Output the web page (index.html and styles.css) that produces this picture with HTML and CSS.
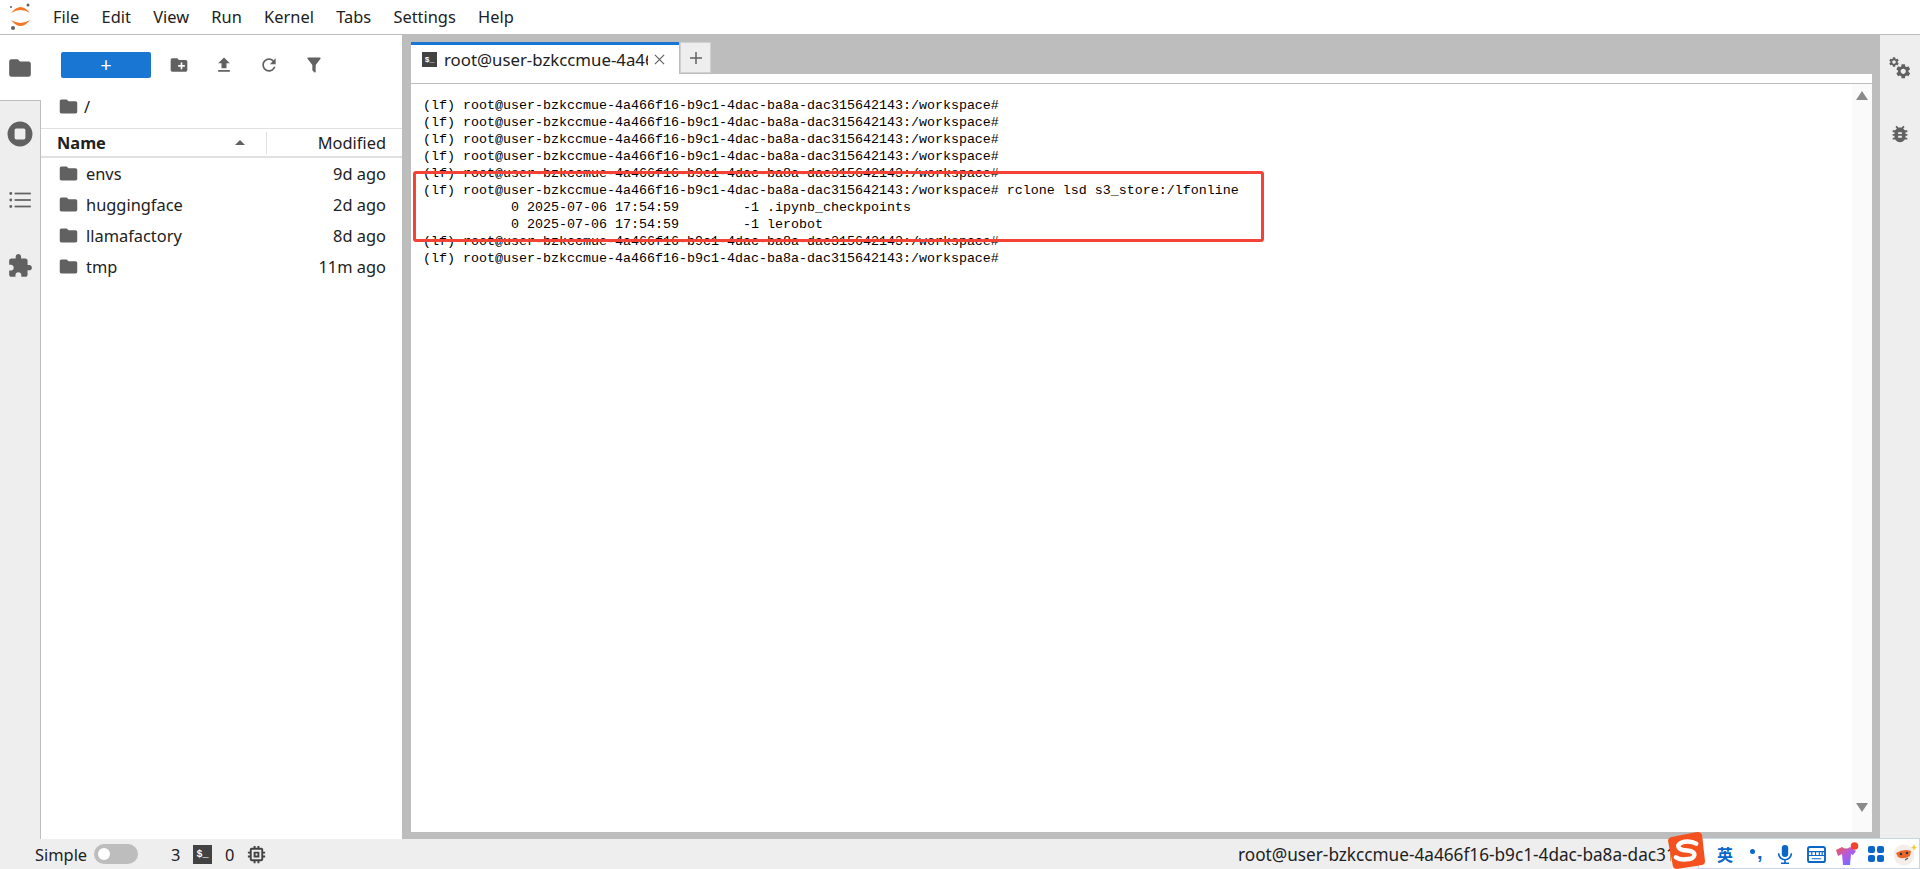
FILE: index.html
```html
<!DOCTYPE html>
<html lang="en">
<head>
<meta charset="utf-8">
<title>JupyterLab</title>
<link rel="stylesheet" href="styles.css">
</head>
<body>
<svg class="defs" aria-hidden="true">
  <symbol id="i-folder" viewBox="0 0 24 24"><path d="M10 4H4c-1.1 0-1.99.9-1.99 2L2 18c0 1.1.9 2 2 2h16c1.1 0 2-.9 2-2V8c0-1.1-.9-2-2-2h-8l-2-2z"/></symbol>
  <symbol id="i-gear" viewBox="0 0 24 24"><path d="M19.14 12.94c.04-.3.06-.61.06-.94 0-.32-.02-.64-.07-.94l2.03-1.58c.18-.14.23-.41.12-.61l-1.92-3.32c-.12-.22-.37-.29-.59-.22l-2.39.96c-.5-.38-1.03-.7-1.62-.94l-.36-2.54c-.04-.24-.24-.41-.48-.41h-3.84c-.24 0-.43.17-.47.41l-.36 2.54c-.59.24-1.13.57-1.62.94l-2.39-.96c-.22-.08-.47 0-.59.22L2.74 8.87c-.12.21-.08.47.12.61l2.03 1.58c-.05.3-.09.63-.09.94s.02.64.07.94l-2.03 1.58c-.18.14-.23.41-.12.61l1.92 3.32c.12.22.37.29.59.22l2.39-.96c.5.38 1.03.7 1.62.94l.36 2.54c.05.24.24.41.48.41h3.84c.24 0 .44-.17.47-.41l.36-2.54c.59-.24 1.13-.56 1.62-.94l2.39.96c.22.08.47 0 .59-.22l1.92-3.32c.12-.22.07-.47-.12-.61l-2.01-1.58zM12 15.6c-1.98 0-3.6-1.62-3.6-3.6s1.62-3.6 3.6-3.6 3.6 1.62 3.6 3.6-1.62 3.6-3.6 3.6z"/></symbol>
</svg>

<header class="menubar">
  <svg class="logo" viewBox="0 0 40 34">
    <path class="logo-arc" d="M11 13Q20.500 1 30 13Q20.500 7 11 13Z"/>
    <path class="logo-arc" d="M11 20Q20.500 32 30 20Q20.500 26 11 20Z"/>
    <circle class="logo-dot" cx="11" cy="7" r="1"/>
    <circle class="logo-dot" cx="28" cy="5" r="1.500"/>
    <circle class="logo-dot" cx="13" cy="28" r="2"/>
  </svg>
  <nav class="menu">
    <span class="menu-item">File</span>
    <span class="menu-item">Edit</span>
    <span class="menu-item">View</span>
    <span class="menu-item">Run</span>
    <span class="menu-item">Kernel</span>
    <span class="menu-item">Tabs</span>
    <span class="menu-item">Settings</span>
    <span class="menu-item">Help</span>
  </nav>
</header>

<div class="workspace">
  <aside class="side side-left">
    <div class="side-tab side-tab-active">
      <svg class="side-icon" viewBox="0 0 24 24"><use href="#i-folder"/></svg>
    </div>
    <div class="side-tab">
      <svg class="side-icon side-icon-stop" viewBox="0 0 24 24"><path d="M12 .5a11.500 11.500 0 1 0 0 23 11.500 11.500 0 0 0 0-23zM17 15.500c0 .8-.7 1.500-1.500 1.500h-7c-.8 0-1.500-.7-1.500-1.500v-7C7 7.700 7.700 7 8.500 7h7c.8 0 1.500.7 1.500 1.500z"/></svg>
    </div>
    <div class="side-tab">
      <svg class="side-icon" viewBox="0 0 24 24"><circle cx="3.500" cy="6" r="1.300"/><circle cx="3.500" cy="12" r="1.300"/><circle cx="3.500" cy="18" r="1.300"/><rect x="7" y="5.200" width="15" height="1.600"/><rect x="7" y="11.200" width="15" height="1.600"/><rect x="7" y="17.200" width="15" height="1.600"/></svg>
    </div>
    <div class="side-tab">
      <svg class="side-icon" viewBox="0 0 24 24"><path d="M20.500 11H19V7c0-1.100-.9-2-2-2h-4V3.500C13 2.120 11.880 1 10.500 1S8 2.120 8 3.500V5H4c-1.100 0-1.990.9-1.990 2v3.800H3.500c1.490 0 2.700 1.210 2.700 2.700s-1.210 2.700-2.700 2.700H2V20c0 1.100.9 2 2 2h3.800v-1.500c0-1.490 1.210-2.700 2.700-2.700 1.490 0 2.700 1.210 2.700 2.700V22H17c1.100 0 2-.9 2-2v-4h1.500c1.380 0 2.500-1.120 2.500-2.500S21.880 11 20.500 11z"/></svg>
    </div>
    <div class="side-fill"></div>
  </aside>

  <section class="files">
    <div class="toolbar">
      <button class="new-btn">+</button>
      <div class="tool"><svg class="tool-icon" viewBox="0 0 24 24"><path d="M20 6h-8l-2-2H4c-1.110 0-1.990.89-1.990 2L2 18c0 1.110.89 2 2 2h16c1.110 0 2-.89 2-2V8c0-1.110-.89-2-2-2zm-1 8h-3v3h-2v-3h-3v-2h3V9h2v3h3v2z"/></svg></div>
      <div class="tool"><svg class="tool-icon" viewBox="0 0 24 24"><path d="M9 16h6v-6h4l-7-7-7 7h4v6zm-4 2h14v2H5z"/></svg></div>
      <div class="tool"><svg class="tool-icon" viewBox="0 0 24 24"><path d="M17.650 6.350C16.200 4.900 14.210 4 12 4c-4.420 0-7.990 3.580-7.990 8s3.570 8 7.990 8c3.730 0 6.840-2.550 7.730-6h-2.080c-.82 2.330-3.040 4-5.650 4-3.310 0-6-2.690-6-6s2.690-6 6-6c1.660 0 3.140.69 4.220 1.780L13 11h7V4l-2.350 2.350z"/></svg></div>
      <div class="tool"><svg class="tool-icon" viewBox="0 0 24 24"><path d="M14 12v7.880c.04.3-.06.62-.29.83-.39.39-1.020.39-1.410 0l-2.010-2.010c-.23-.23-.33-.54-.29-.83V12h-.03L4.210 4.620c-.34-.43-.26-1.060.17-1.400.19-.14.4-.22.62-.22h14c.22 0 .43.08.62.22.43.34.51.97.17 1.400L14.030 12H14z"/></svg></div>
    </div>
    <div class="crumbs">
      <svg class="crumb-icon" viewBox="0 0 24 24"><use href="#i-folder"/></svg>
      <span class="crumb-text">/</span>
    </div>
    <div class="list-head">
      <div class="head-name"><span>Name</span><i class="caret-up"></i></div>
      <div class="head-mod">Modified</div>
    </div>
    <ul class="list">
      <li class="row"><svg class="row-icon" viewBox="0 0 24 24"><use href="#i-folder"/></svg><span class="row-name">envs</span><span class="row-date">9d ago</span></li>
      <li class="row"><svg class="row-icon" viewBox="0 0 24 24"><use href="#i-folder"/></svg><span class="row-name">huggingface</span><span class="row-date">2d ago</span></li>
      <li class="row"><svg class="row-icon" viewBox="0 0 24 24"><use href="#i-folder"/></svg><span class="row-name">llamafactory</span><span class="row-date">8d ago</span></li>
      <li class="row"><svg class="row-icon" viewBox="0 0 24 24"><use href="#i-folder"/></svg><span class="row-name">tmp</span><span class="row-date">11m ago</span></li>
    </ul>
  </section>

  <main class="dock">
    <div class="tabbar">
      <div class="tab">
        <span class="term-icon term-icon-tab">$_</span>
        <span class="tab-title">root@user-bzkccmue-4a466f16-b9c1-4dac-ba8a-dac315642143</span>
        <svg class="tab-close" viewBox="0 0 12 12"><path d="M1 1l10 10M11 1L1 11"/></svg>
      </div>
      <div class="tab-add"><svg class="tab-plus" viewBox="0 0 12 12"><path d="M6 0v12M0 6h12"/></svg></div>
    </div>
    <div class="tab-strip"></div>
    <div class="terminal">
      <pre class="term-text">(lf) root@user-bzkccmue-4a466f16-b9c1-4dac-ba8a-dac315642143:/workspace#
(lf) root@user-bzkccmue-4a466f16-b9c1-4dac-ba8a-dac315642143:/workspace#
(lf) root@user-bzkccmue-4a466f16-b9c1-4dac-ba8a-dac315642143:/workspace#
(lf) root@user-bzkccmue-4a466f16-b9c1-4dac-ba8a-dac315642143:/workspace#
(lf) root@user-bzkccmue-4a466f16-b9c1-4dac-ba8a-dac315642143:/workspace#
(lf) root@user-bzkccmue-4a466f16-b9c1-4dac-ba8a-dac315642143:/workspace# rclone lsd s3_store:/lfonline
           0 2025-07-06 17:54:59        -1 .ipynb_checkpoints
           0 2025-07-06 17:54:59        -1 lerobot
(lf) root@user-bzkccmue-4a466f16-b9c1-4dac-ba8a-dac315642143:/workspace#
(lf) root@user-bzkccmue-4a466f16-b9c1-4dac-ba8a-dac315642143:/workspace#</pre>
      <div class="scrollbar"><i class="sb-up"></i><i class="sb-down"></i></div>
    </div>
  </main>

  <aside class="side side-right">
    <div class="right-tab">
      <svg class="gears" viewBox="0 0 24 24"><use href="#i-gear" x="0" y="0" width="12" height="12"/><use href="#i-gear" x="6.500" y="6.500" width="17.500" height="17.500"/></svg>
    </div>
    <div class="right-tab">
      <svg class="bug" viewBox="0 0 24 24"><path d="M20 8h-2.810c-.45-.78-1.070-1.450-1.820-1.960L17 4.410 15.590 3l-2.170 2.170C12.960 5.060 12.490 5 12 5c-.49 0-.96.06-1.410.17L8.410 3 7 4.410l1.620 1.630C7.880 6.550 7.260 7.220 6.810 8H4v2h2.090c-.05.33-.09.66-.09 1v1H4v2h2v1c0 .34.04.67.09 1H4v2h2.810c1.040 1.790 2.970 3 5.190 3s4.150-1.210 5.190-3H20v-2h-2.090c.05-.33.09-.66.09-1v-1h2v-2h-2v-1c0-.34-.04-.67-.09-1H20V8zm-6 8h-4v-2h4v2zm0-4h-4v-2h4v2z"/></svg>
    </div>
  </aside>
</div>

<footer class="status">
  <div class="status-left">
    <span class="st-simple">Simple</span>
    <span class="toggle"><i class="knob"></i></span>
    <span class="st-num">3</span>
    <span class="term-icon term-icon-status">$_</span>
    <span class="st-num st-zero">0</span>
    <svg class="chip" viewBox="0 0 24 24"><path d="M15 9H9v6h6V9zm-2 4h-2v-2h2v2zm8-2V9h-2V7c0-1.100-.9-2-2-2h-2V3h-2v2h-2V3H9v2H7c-1.100 0-2 .9-2 2v2H3v2h2v2H3v2h2v2c0 1.100.9 2 2 2h2v2h2v-2h2v2h2v-2h2c1.100 0 2-.9 2-2v-2h2v-2h-2v-2h2zm-4 6H7V7h10v10z"/></svg>
  </div>
  <div class="status-right">root@user-bzkccmue-4a466f16-b9c1-4dac-ba8a-dac315642143</div>
</footer>

<div class="annotation"></div>

<div class="ime">
  <svg class="ime-logo" viewBox="0 0 38 38">
    <path class="ime-logo-bg" d="M5 5L30 0Q34 0 35 3L38 30Q38 33 35 34L9 38Q6 38 5 35L0 9Q0 6 5 5Z"/>
    <path class="ime-logo-s" d="M29 12Q24 9 17 10Q9 12 11 16Q13 19 20 19Q28 20 27 24Q26 28 18 28Q12 29 8 26"/>
  </svg>
  <span class="ime-text">英</span>
  <span class="ime-punct"><i class="ime-dot"></i><span class="ime-comma">,</span></span>
  <svg class="ime-mic" viewBox="0 0 20 24"><rect x="6" y="0" width="8" height="15" rx="4"/><path class="ime-line" d="M2 10.500a8 8 0 0 0 16 0M10 18.500V23M5 23h10"/></svg>
  <svg class="ime-kbd" viewBox="0 0 20 18"><rect class="ime-line" x="1" y="1" width="18" height="16" rx="2"/><path class="ime-line ime-thin" d="M1 6h18M1 10h18M5 6v4M9 6v4M13 6v4M16 6v4M5 13.500h10"/></svg>
  <svg class="ime-shirt" viewBox="0 0 24 24">
    <defs><linearGradient id="shirt" x1="0" y1="0" x2="1" y2="1"><stop offset="0" stop-color="#f0574a"/><stop offset=".5" stop-color="#b05ce8"/><stop offset="1" stop-color="#4a7bff"/></linearGradient></defs>
    <path fill="url(#shirt)" d="M1 8L7 5Q11 8 15 5L21 9L18 13L16 12L15 23H8L7 12L3 14Z"/>
    <circle cx="19.500" cy="4" r="3.800" fill="#f0442f"/>
  </svg>
  <svg class="ime-grid" viewBox="0 0 16 16"><rect x="0" y="0" width="7" height="7" rx="2"/><rect x="9" y="0" width="7" height="7" rx="2"/><rect x="0" y="9" width="7" height="7" rx="2"/><rect x="9" y="9" width="7" height="7" rx="2"/></svg>
  <svg class="ime-mascot" viewBox="0 0 24 24">
    <circle cx="11" cy="13" r="10.500" fill="#f4eeea"/>
    <path d="M3 11Q11 6 18 9L17 14Q10 18 5 15Z" fill="#e8672a"/>
    <circle cx="8" cy="12" r="1.200" fill="#333"/><circle cx="14" cy="11" r="1.200" fill="#333"/>
    <path d="M12 18l3-2" stroke="#555" stroke-width="1.200"/>
    <path d="M21 2l1 2.500 2 1-2 1-1 2.500-1-2.500-2-1 2-1z" fill="#f5c944"/>
  </svg>
</div>
</body>
</html>
```

FILE: styles.css
```css
* { box-sizing: border-box; }
html, body { margin: 0; height: 100%; }
body {
  display: flex;
  flex-direction: column;
  height: 869px;
  overflow: hidden;
  position: relative;
  font-family: "Noto Sans", "Open Sans", sans-serif;
  font-size: 16.400px;
  color: #212121;
  background: #fff;
}
.defs { width: 0; height: 0; position: absolute; }

/* menu */
.menubar {
  display: flex;
  align-items: center;
  height: 35px;
  flex: none;
  border-bottom: 1px solid #bdbdbd;
}
.logo { width: 40px; height: 34px; flex: none; }
.logo-arc { fill: #f37726; }
.logo-dot { fill: #616161; }
.menu { display: flex; padding-left: 13px; }
.menu-item { margin-right: 22.300px; font-size: 16.400px; line-height: 20px; }

/* layout */
.workspace { flex: 1; display: flex; min-height: 0; }
.side { width: 41px; flex: none; background: #eee; display: flex; flex-direction: column; }
.side-left { background: transparent; }
.side-tab {
  height: 66px;
  flex: none;
  display: flex;
  align-items: center;
  justify-content: center;
  padding-right: 1px;
  background: #eee;
  border-right: 1px solid #bdbdbd;
}
.side-tab-active { background: #fff; border-right: 0; border-bottom: 1px solid #bdbdbd; }
.side-fill { flex: 1; background: #eee; border-right: 1px solid #bdbdbd; }
.side-icon { width: 26px; height: 26px; fill: #616161; }
.side-icon-stop { width: 26px; height: 26px; }

/* file browser */
.files { width: 361px; flex: none; display: flex; flex-direction: column; background: #fff; }
.toolbar { display: flex; align-items: center; height: 60px; padding: 0 0 0 20px; }
.new-btn {
  width: 90px;
  height: 26px;
  border: 0;
  border-radius: 2px;
  background: #1976d2;
  color: #fff;
  font-family: inherit;
  font-size: 20px;
  line-height: 26px;
  padding: 0;
  margin-right: 5px;
}
.tool { width: 45px; display: flex; justify-content: center; }
.tool-icon { width: 20px; height: 20px; fill: #616161; }
.crumbs { display: flex; align-items: center; height: 22px; margin-bottom: 11px; padding-left: 17px; }
.crumb-icon { width: 21px; height: 21px; fill: #616161; }
.crumb-text { margin-left: 5px; }
.list-head {
  display: flex;
  height: 30px;
  border-top: 1px solid #e0e0e0;
  border-bottom: 2px solid #e0e0e0;
  align-items: center;
}
.head-name {
  width: 226px;
  padding: 0 17px 0 16px;
  display: flex;
  align-items: center;
  justify-content: space-between;
  font-weight: 700;
  border-right: 1px solid #e0e0e0;
  height: 22px;
}
.caret-up {
  width: 0; height: 0;
  border-left: 5.500px solid transparent;
  border-right: 5.500px solid transparent;
  border-bottom: 5.500px solid #616161;
  margin-right: 4px;
}
.head-mod { flex: 1; text-align: right; padding-right: 16px; }
.list { list-style: none; margin: 0; padding: 0; }
.row { display: flex; align-items: center; height: 31px; padding: 0 16px 0 17px; }
.row-icon { width: 21px; height: 21px; fill: #616161; flex: none; }
.row-name { flex: 1; margin-left: 7px; }
.row-date { color: #212121; }

/* dock */
.dock {
  flex: 1;
  min-width: 0;
  display: flex;
  flex-direction: column;
  background: #bdbdbd;
  padding: 7px 8px 7px 9px;
}
.tabbar { display: flex; height: 32px; flex: none; }
.tab {
  width: 268px;
  display: flex;
  align-items: center;
  background: #fff;
  border-top: 3px solid #1976d2;
  padding: 0 11px;
  position: relative;
}
.tab-title {
  width: 204px;
  margin-left: 7px;
  overflow: hidden;
  white-space: nowrap;
  font-size: 16.800px;
  flex: none;
}
.tab-close { width: 11px; height: 11px; margin-left: 6px; stroke: #616161; stroke-width: 1.300; flex: none; }
.tab-add {
  width: 31px;
  height: 31px;
  margin-left: 1px;
  background: #eee;
  border: 1px solid #d0d0d0;
  display: flex;
  align-items: center;
  justify-content: center;
}
.tab-plus { width: 12px; height: 12px; stroke: #616161; stroke-width: 1.500; }
.tab-strip { height: 10px; flex: none; background: #fff; border-bottom: 1px solid #bdbdbd; }
.terminal { flex: 1; min-height: 0; position: relative; display: flex; background: #fff; }
.term-text {
  flex: 1;
  margin: 0;
  padding: 13px 0 0 12px;
  font-family: "Liberation Mono", "DejaVu Sans Mono", monospace;
  font-size: 13.330px;
  line-height: 17px;
  color: #000;
}
.scrollbar {
  width: 20px;
  flex: none;
  background: #fafafa;
  display: flex;
  flex-direction: column;
  justify-content: space-between;
  align-items: center;
  padding: 7px 0 20px;
}
.sb-up, .sb-down {
  width: 0; height: 0;
  border-left: 6px solid transparent;
  border-right: 6px solid transparent;
}
.sb-up { border-bottom: 9px solid #8a8a8a; }
.sb-down { border-top: 9px solid #8a8a8a; }

.side-right { width: 40px; }
.right-tab { height: 66px; display: flex; align-items: center; justify-content: center; }
.gears { width: 24px; height: 24px; fill: #616161; }
.bug { width: 22px; height: 22px; fill: #616161; }

/* status bar */
.status { height: 30px; flex: none; display: flex; align-items: center; background: #eee; }
.status-left { display: flex; align-items: center; flex: 1; padding-left: 35px; }
.st-simple { width: 59px; }
.toggle { width: 44px; height: 20px; border-radius: 10px; background: #bdbdbd; display: flex; align-items: center; padding-left: 4px; }
.knob { width: 12px; height: 12px; border-radius: 50%; background: #fff; }
.st-num { margin-left: 33px; width: 22px; }
.st-zero { margin-left: 13px; width: 20px; }
.term-icon {
  display: inline-block;
  flex: none;
  background: #424242;
  color: #fff;
  font-family: "Liberation Mono", monospace;
  font-weight: 700;
  text-align: center;
}
.term-icon-tab { width: 15px; height: 15px; font-size: 8px; line-height: 15px; }
.term-icon-status { width: 19px; height: 19px; font-size: 10px; line-height: 19px; }
.chip { width: 23px; height: 23px; fill: #424242; }
.status-right { width: 433px; margin-right: 249px; flex: none; white-space: nowrap; overflow: hidden; font-size: 17.200px; }

/* overlays */
.annotation {
  position: absolute;
  left: 413px;
  top: 171px;
  width: 851px;
  height: 71px;
  border: 3px solid #f44336;
  border-radius: 3px;
}
.ime {
  position: absolute;
  left: 1668px;
  top: 832px;
  width: 252px;
  height: 37px;
  display: flex;
  align-items: flex-end;
}
.ime::before {
  content: "";
  position: absolute;
  left: 30px;
  right: 0;
  top: 6px;
  bottom: 0;
  background: #fff;
  border: 1px solid #c6d6e8;
}
.ime > * { position: relative; }
.ime-logo { width: 37px; height: 37px; flex: none; }
.ime-logo-bg { fill: #f4511e; }
.ime-logo-s { fill: none; stroke: #fff; stroke-width: 4.500; stroke-linecap: round; }
.ime-text {
  margin: 0 0 5px 12px;
  width: 16px;
  font-family: "Noto Sans CJK SC", sans-serif;
  font-size: 16px;
  font-weight: 700;
  line-height: 20px;
  color: #0a66c8;
}
.ime-punct { width: 14px; height: 20px; margin: 0 0 5px 17px; display: block; }
.ime-dot { position: absolute; left: 0; top: 5px; width: 5px; height: 5px; border-radius: 50%; background: #0a66c8; }
.ime-comma { position: absolute; left: 7px; top: -3px; font-family: "Liberation Sans", sans-serif; font-weight: 700; font-size: 20px; color: #0a66c8; }
.ime-mic { width: 16px; height: 21px; margin: 0 0 4px 13px; fill: #0a66c8; }
.ime-line { fill: none; stroke: #0a66c8; stroke-width: 2; }
.ime-thin { stroke-width: 1.200; }
.ime-kbd { width: 19px; height: 17px; margin: 0 0 6px 14px; }
.ime-shirt { width: 24px; height: 24px; margin: 0 0 3px 9px; }
.ime-grid { width: 16px; height: 16px; margin: 0 0 7px 9px; fill: #0a66c8; }
.ime-mascot { width: 24px; height: 24px; margin: 0 0 3px 9px; }
```
